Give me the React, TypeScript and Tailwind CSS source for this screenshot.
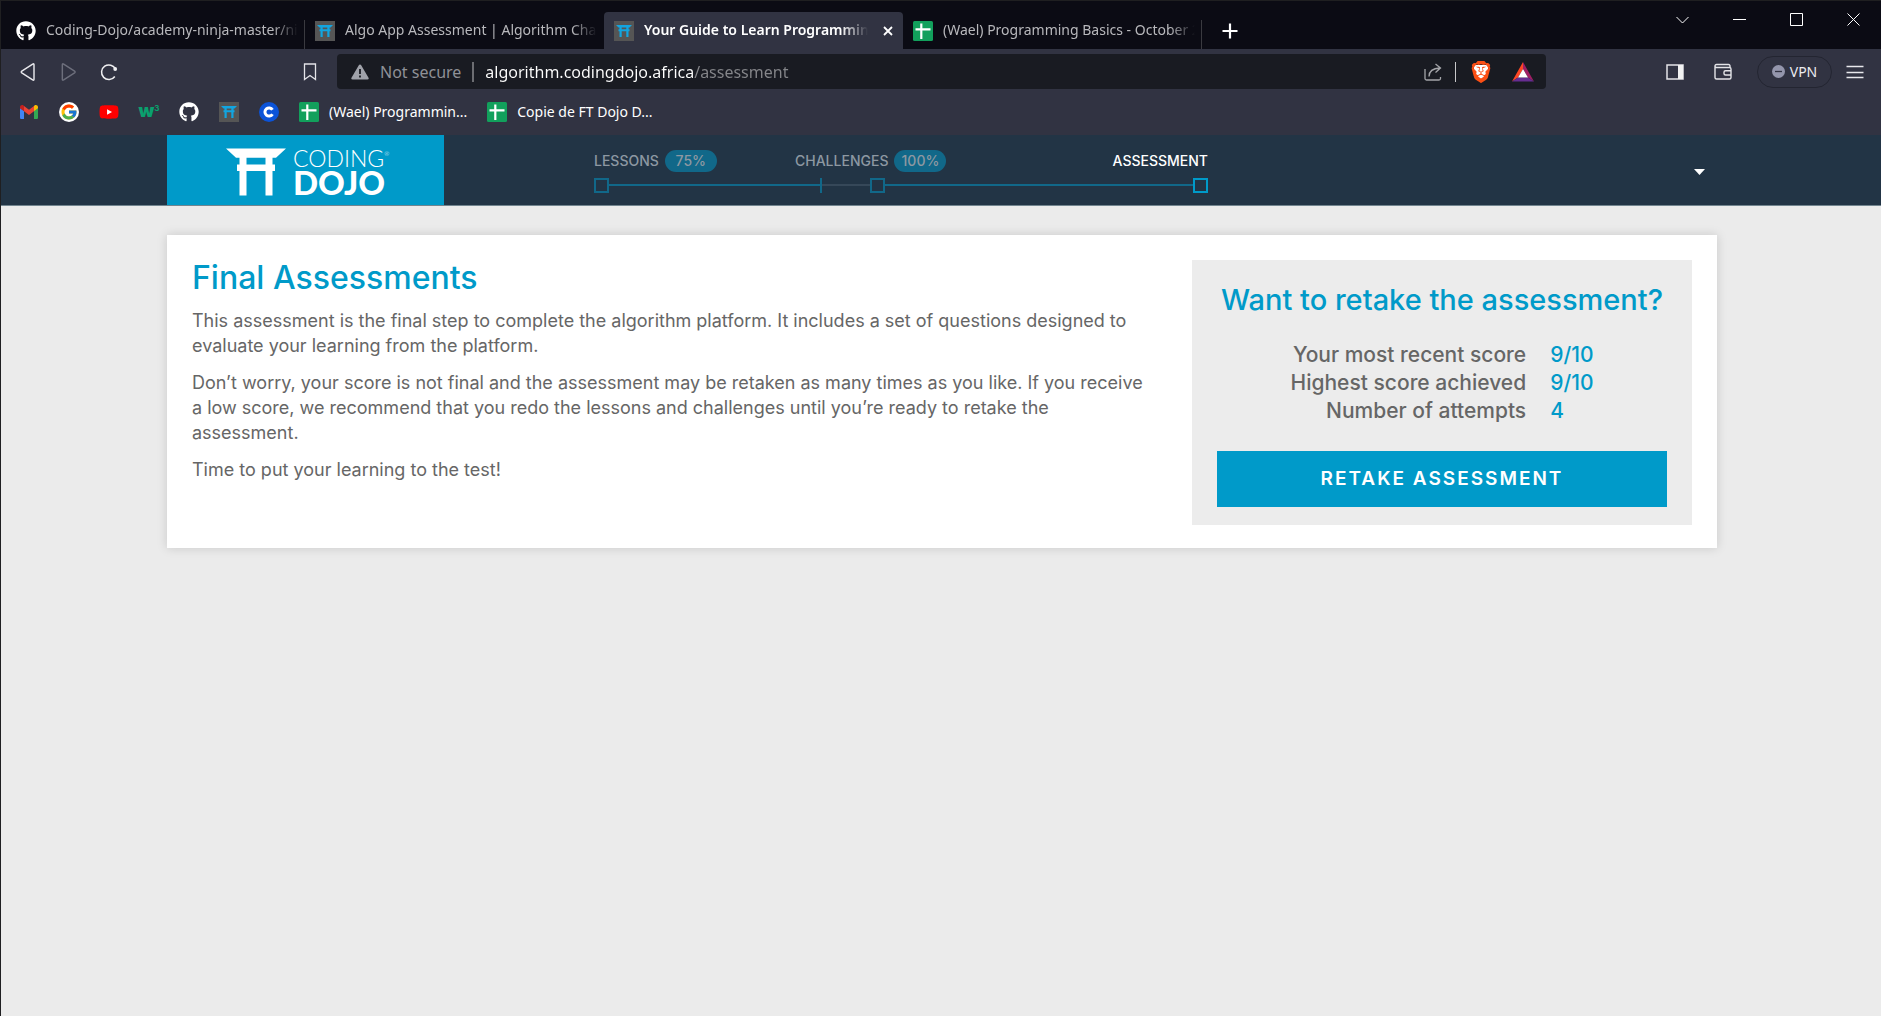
import React from "react";
import { FaGithub, FaYoutube } from "react-icons/fa";
import { FcGoogle } from "react-icons/fc";
import { SiBrave } from "react-icons/si";

function GithubIcon() {
  return <FaGithub className="size-5 shrink-0 text-white" aria-hidden="true" />;
}

function ToriiIcon() {
  return (
    <svg viewBox="0 0 20 20" className="size-5 shrink-0" aria-hidden="true">
      <rect width="20" height="20" fill="#555555" />
      <path
        fill="#12a5e0"
        d="M2 4h16l-2.500 2.600h-.9v1.600h.9v2h-1V16h-2.200v-5.800H7.700V16H5.500v-5.800h-1v-2h.9V6.600h-.9zM7.700 6.600v1.600h4.600V6.600z"
      />
    </svg>
  );
}

function SheetsIcon() {
  return (
    <svg viewBox="0 0 20 20" className="size-5 shrink-0" aria-hidden="true">
      <rect width="20" height="20" rx="1.500" fill="#12a05c" />
      <path d="M8.300 2.500v15.500M2.500 8.300h15" stroke="#fff" strokeWidth="2.200" fill="none" />
    </svg>
  );
}

function GmailIcon() {
  return (
    <svg viewBox="0 0 18 14" className="h-[14px] w-5" aria-hidden="true">
      <path fill="#4285f4" d="M0 3v9.700C0 13.400.6 14 1.300 14H4V6z" />
      <path fill="#34a853" d="M18 3v9.700c0 .7-.6 1.300-1.300 1.300H14V6z" />
      <path fill="#ea4335" d="M4 6.200V1l5 3.800L14 1v5.200l-5 3.800z" />
      <path fill="#c5221f" d="M0 2.200C0 .2 2.200-.6 3.500.5L4 1v5.200L0 3.200z" />
      <path fill="#fbbc04" d="M18 2.200C18 .2 15.800-.6 14.500.5L14 1v5.200l4-3z" />
    </svg>
  );
}

function GoogleIcon() {
  return (
    <span className="flex size-5 items-center justify-center rounded-full bg-white">
      <FcGoogle className="size-[18px]" />
    </span>
  );
}

function YoutubeIcon() {
  return (
    <span className="relative flex size-5 items-center justify-center">
      <span className="absolute size-2 bg-white" />
      <FaYoutube className="relative size-5 text-[#ff0000]" />
    </span>
  );
}

function W3Icon() {
  return (
    <span className="flex size-5 items-start justify-center font-[Inter,sans-serif] text-[#0aa06e]">
      <b className="text-lg leading-[18px] font-black">w</b>
      <b className="text-[8px] leading-3">3</b>
    </span>
  );
}

function BlueCIcon() {
  return (
    <svg viewBox="0 0 20 20" className="size-5" aria-hidden="true">
      <circle cx="10" cy="10" r="10" fill="#0b53d8" />
      <path d="M13.500 7.800a4.100 4.100 0 1 0 0 4.400" fill="none" stroke="#fff" strokeWidth="3" />
    </svg>
  );
}

function Tab({
  icon,
  title,
  active = false,
  separator = false,
}: {
  icon: React.ReactNode;
  title: string;
  active?: boolean;
  separator?: boolean;
}) {
  return (
    <div
      className={
        active
          ? "flex h-[37px] min-w-0 flex-[0_1_299px] items-center rounded-t bg-[#313342] pr-[7px] pl-[10px]"
          : "flex h-[37px] min-w-0 flex-[0_1_299px] items-center pl-[10px]"
      }
    >
      <button type="button" className="flex min-w-0 flex-1 items-center gap-[10px] text-left">
        {icon}
        <span
          className={
            active
              ? "min-w-0 flex-1 overflow-hidden mask-r-from-88% pb-[2px] text-sm font-semibold whitespace-nowrap text-white"
              : "min-w-0 flex-1 overflow-hidden mask-r-from-90% pb-[2px] text-sm whitespace-nowrap text-[#b8b8bc]"
          }
        >
          {title}
        </span>
      </button>
      {active && (
        <button type="button" aria-label="Close tab" className="ml-3 flex size-4 items-center justify-center">
          <svg viewBox="0 0 10 10" className="size-[10px]" aria-hidden="true">
            <path d="M1 1l8 8M9 1l-8 8" stroke="#fff" strokeWidth="1.800" />
          </svg>
        </button>
      )}
      {!active && <span className={separator ? "ml-[6px] h-[29px] w-px self-end bg-[#3a3a40]" : "ml-[6px] w-px"} />}
    </div>
  );
}

function TabStrip() {
  return (
    <div className="flex h-12 items-end bg-[#0b0b14] pl-[5px]">
      <div className="flex min-w-0 flex-1 items-end">
        <Tab icon={<GithubIcon />} title="Coding-Dojo/academy-ninja-master/ninja" separator />
        <Tab icon={<ToriiIcon />} title="Algo App Assessment | Algorithm Challenges" />
        <Tab icon={<ToriiIcon />} title="Your Guide to Learn Programming" active />
        <Tab icon={<SheetsIcon />} title="(Wael) Programming Basics - October 2022" separator />
        <button type="button" aria-label="New tab" className="ml-5 flex h-[37px] w-4 shrink-0 items-center">
          <svg viewBox="0 0 16 16" className="size-4" aria-hidden="true">
            <path d="M8 .5v15M.5 8h15" stroke="#fff" strokeWidth="2.200" />
          </svg>
        </button>
      </div>
      <div className="flex h-full shrink-0 items-start gap-11 pt-3 pr-[21px] text-white">
        <button type="button" aria-label="Search tabs">
          <svg viewBox="0 0 13 13" className="size-[13px]" fill="none" stroke="currentColor" aria-hidden="true">
            <path d="M.5 4l6 6 6-6" />
          </svg>
        </button>
        <button type="button" aria-label="Minimize">
          <svg viewBox="0 0 13 13" className="size-[13px]" fill="none" stroke="currentColor" aria-hidden="true">
            <path d="M0 6.500h13" />
          </svg>
        </button>
        <button type="button" aria-label="Maximize">
          <svg viewBox="0 0 13 13" className="size-[13px]" fill="none" stroke="currentColor" aria-hidden="true">
            <path d="M.5.5h12v12H.5z" />
          </svg>
        </button>
        <button type="button" aria-label="Close window">
          <svg viewBox="0 0 13 13" className="size-[13px]" fill="none" stroke="currentColor" aria-hidden="true">
            <path d="M.5.5l12 12M12.500.5l-12 12" />
          </svg>
        </button>
      </div>
    </div>
  );
}

function Toolbar() {
  return (
    <div className="flex items-center pt-[5px] pr-[17px] pl-[18px]">
      <div className="flex items-center gap-5">
        <button type="button" aria-label="Back">
          <svg viewBox="0 0 18 18" className="size-5" fill="none" stroke="#e8e8ec" strokeWidth="1.300" strokeLinejoin="round" aria-hidden="true">
            <path d="M13.500 2.500v13q0 1.300-1.200.6L2.500 9.800q-1-.8 0-1.600l9.800-6.300q1.200-.7 1.200.6z" />
          </svg>
        </button>
        <button type="button" aria-label="Forward">
          <svg viewBox="0 0 18 18" className="size-5" fill="none" stroke="#6d6f7c" strokeWidth="1.300" strokeLinejoin="round" aria-hidden="true">
            <path d="M3 2.500v13q0 1.300 1.200.6l9.800-6.300q1-.8 0-1.600L4.200 1.900Q3 1.200 3 2.500z" />
          </svg>
        </button>
        <button type="button" aria-label="Reload">
          <svg viewBox="0 0 20 20" className="size-5" fill="none" stroke="#f0f0f2" strokeWidth="1.500" aria-hidden="true">
            <path d="M16.500 7.200A7.300 7.300 0 1 0 15.800 14.500" />
            <circle cx="16.200" cy="7" r="1.900" fill="#f0f0f2" stroke="none" />
          </svg>
        </button>
      </div>
      <button type="button" aria-label="Bookmark this page" className="ml-[184px]">
        <svg viewBox="0 0 14 18" className="h-[18px] w-[14px]" fill="none" stroke="#e4e4e8" strokeWidth="1.300" aria-hidden="true">
          <path d="M1.500 1h11v15.500L7 12.500l-5.500 4z" />
        </svg>
      </button>
      <div className="ml-5 flex h-[35px] min-w-0 max-w-[1209px] flex-1 items-center rounded bg-[#191b22] pr-3 pl-[14px] text-base">
        <svg viewBox="0 0 18 16" className="h-4 w-[18px] shrink-0" aria-hidden="true">
          <path d="M9 .5q.8 0 1.200.7l7.300 12.500q.8 1.800-1.100 1.800H1.600Q-.3 15.500.5 13.700L7.800 1.200Q8.200.5 9 .5z" fill="#a0a2aa" />
          <path d="M9 5v5M9 11.500v2" stroke="#191b22" strokeWidth="1.800" />
        </svg>
        <span className="ml-[11px] shrink-0 text-[#8f9197]">Not secure</span>
        <span className="mx-[11px] h-5 w-[2px] shrink-0 bg-[#6c6d72]" />
        <input
          type="text"
          aria-label="Address"
          defaultValue="algorithm.codingdojo.africa/assessment"
          className="min-w-0 flex-1 bg-[linear-gradient(90deg,#ffffff_209px,#85868a_209px)] bg-clip-text text-transparent caret-white outline-none"
        />
        <button type="button" aria-label="Share" className="shrink-0">
          <svg viewBox="0 0 20 20" className="size-5" fill="none" stroke="#a4a5a9" strokeWidth="1.300" aria-hidden="true">
            <path d="M2 7v9.500q0 1.500 1.500 1.500h12.500q1.500 0 1.500-1.500V15" />
            <path d="M6 14.500q0-8 11-8.500M12.500 2l5 4-5 4.500" />
          </svg>
        </button>
        <span className="mr-[14px] ml-3 h-5 w-px shrink-0 bg-[#c8c8ca]" />
        <button type="button" aria-label="Brave Shields" className="relative flex shrink-0 items-center justify-center">
          <span className="absolute size-[14px] rounded-b-md bg-white" />
          <SiBrave className="relative size-[22px] text-[#fb4f14]" />
        </button>
        <button type="button" aria-label="Brave Rewards" className="ml-5 shrink-0">
          <svg viewBox="0 0 22 20" className="h-5 w-[22px]" aria-hidden="true">
            <path d="M11 0v7L6 15.500 0 19.500z" fill="#ff4724" />
            <path d="M11 0l11 19.500-6-4L11 7z" fill="#9e1f63" />
            <path d="M0 19.500l6-4h10l6 4z" fill="#662d91" />
            <path d="M11 7l5 8.500H6z" fill="#fff" />
          </svg>
        </button>
      </div>
      <div className="ml-auto flex shrink-0 items-center">
        <button type="button" aria-label="Sidebar">
          <svg viewBox="0 0 18 16" className="h-4 w-[18px]" aria-hidden="true">
            <path d="M1 1h16v14H1z" fill="none" stroke="#e4e4e8" strokeWidth="1.500" />
            <path d="M12 1h5v14h-5z" fill="#f2f2f2" />
          </svg>
        </button>
        <button type="button" aria-label="Wallet" className="ml-[30px]">
          <svg viewBox="0 0 18 17" className="h-[17px] w-[18px]" fill="none" stroke="#e4e4e8" strokeWidth="1.400" aria-hidden="true">
            <path d="M16 4.500V3q0-1.500-1.500-1.500H2.500Q1 1.500 1 3v11.500Q1 16 2.500 16h13q1.500 0 1.500-1.500V6q0-1.500-1.500-1.500H2.500Q1 4.500 1 3" />
            <path d="M17 7.800h-5.500q-1.500 0-1.500 1.500v1.200q0 1.500 1.500 1.500H17" />
          </svg>
        </button>
        <button
          type="button"
          className="ml-[25px] flex h-8 w-[75px] items-center justify-center gap-[5px] rounded-full border border-[#232531] text-sm text-[#ececf0]"
        >
          <svg viewBox="0 0 13 13" className="size-[13px]" aria-hidden="true">
            <circle cx="6.500" cy="6.500" r="6.500" fill="#9496ac" />
            <path d="M3 6.500h7" stroke="#313342" strokeWidth="1.300" />
          </svg>
          VPN
        </button>
        <button type="button" aria-label="Menu" className="ml-[14px]">
          <svg viewBox="0 0 18 14" className="h-[14px] w-[18px]" stroke="#e8e8ec" strokeWidth="1.300" aria-hidden="true">
            <path d="M.5 1.500h17M.5 7.500h17M.5 12.500h17" />
          </svg>
        </button>
      </div>
    </div>
  );
}

const bookmarks: { name: string; icon: React.ReactNode }[] = [
  { name: "Gmail", icon: <GmailIcon /> },
  { name: "Google", icon: <GoogleIcon /> },
  { name: "YouTube", icon: <YoutubeIcon /> },
  { name: "W3Schools", icon: <W3Icon /> },
  { name: "GitHub", icon: <GithubIcon /> },
  { name: "Coding Dojo", icon: <ToriiIcon /> },
  { name: "Coinbase", icon: <BlueCIcon /> },
];

function BookmarksBar() {
  return (
    <div className="flex h-[46px] items-center gap-5 pl-[18px] text-sm text-white">
      {bookmarks.map((b) => (
        <a key={b.name} href="#" aria-label={b.name} className="flex w-5 shrink-0 items-center justify-center">
          {b.icon}
        </a>
      ))}
      <a href="#" className="flex items-center gap-[10px]">
        <SheetsIcon />
        (Wael) Programmin...
      </a>
      <a href="#" className="flex items-center gap-[10px]">
        <SheetsIcon />
        Copie de FT Dojo D...
      </a>
    </div>
  );
}

function Logo() {
  return (
    <a
      href="#"
      aria-label="Coding Dojo"
      className="flex h-[70px] w-[277px] shrink-0 items-center gap-[7px] bg-[#009ac9] pt-1 pl-[59px] font-[Lato,sans-serif] text-white"
    >
      <svg viewBox="0 0 60 48" className="h-12 w-[60px]" fill="currentColor" aria-hidden="true">
        <path d="M0 .5h60L50 9.700h-3.500v6.800H49V23h-2.500v24.500h-7V23h-19v24.500h-7V23H11v-6.500h2.500V9.700H10zM20.500 9.700v6.800h19V9.700z" />
      </svg>
      <span className="flex flex-col">
        <span className="flex text-[23px] leading-5 font-light">
          CODING<span className="text-[6px] leading-3">®</span>
        </span>
        <span className="text-[33px] leading-7 font-black">DOJO</span>
      </span>
    </a>
  );
}

function Node({ current = false }: { current?: boolean }) {
  return (
    <span
      className={
        current ? "size-[15px] shrink-0 border-2 border-[#009ac9]" : "size-[15px] shrink-0 border-2 border-[#116889]"
      }
    />
  );
}

function Progress() {
  return (
    <nav className="w-full max-w-[614px] text-sm font-medium text-[#8d98a2]">
      <div className="flex h-[22px] items-center">
        <a href="#" className="flex w-[201px] items-center gap-[6px]">
          LESSONS
          <span className="flex h-[22px] w-[52px] items-center justify-center rounded-full bg-[#116889]">75%</span>
        </a>
        <a href="#" className="flex items-center gap-[6px]">
          CHALLENGES
          <span className="flex h-[22px] w-[52px] items-center justify-center rounded-full bg-[#116889]">100%</span>
        </a>
        <a href="#" className="ml-auto text-white">
          ASSESSMENT
        </a>
      </div>
      <div className="mt-[6px] flex items-center">
        <Node />
        <span className="h-[2px] flex-[211] bg-[#116889]" />
        <span className="h-[15px] w-[2px] bg-[#116889]" />
        <span className="h-[2px] flex-[48] bg-[#364859]" />
        <Node />
        <span className="h-[2px] flex-[308] bg-[#116889]" />
        <Node current />
      </div>
    </nav>
  );
}

function SiteHeader() {
  return (
    <header className="border-b border-[#72858f] bg-[#223445] pl-[2px]">
      <div className="mx-auto flex max-w-[1550px] items-center">
        <Logo />
        <div className="ml-[150px] flex flex-1 pt-[2px]">
          <Progress />
        </div>
        <button type="button" aria-label="Account menu" className="mr-2 p-1 pt-[7px]">
          <svg viewBox="0 0 11 6" className="h-[6px] w-[11px]" aria-hidden="true">
            <path d="M0 0h11L5.500 6z" fill="#fff" />
          </svg>
        </button>
      </div>
    </header>
  );
}

const scores = [
  ["Your most recent score", "9/10"],
  ["Highest score achieved", "9/10"],
  ["Number of attempts", "4"],
];

function RetakePanel() {
  return (
    <aside className="w-[500px] shrink-0 bg-[#ececec] px-[25px] pt-5 pb-[18px]">
      <h2 className="text-center text-[29px] leading-10 font-medium whitespace-nowrap text-[#009ac9]">
        Want to retake the assessment?
      </h2>
      <table className="mx-auto mt-[21px] text-[21px] leading-7 font-medium">
        <tbody>
          {scores.map(([label, value]) => (
            <tr key={label}>
              <th scope="row" className="pr-6 text-right font-medium">
                {label}
              </th>
              <td className="text-[#009ac9]">{value}</td>
            </tr>
          ))}
        </tbody>
      </table>
      <button
        type="button"
        className="mt-[26px] h-14 w-full bg-[#009ac9] text-[19px] font-semibold tracking-[2px] text-white"
      >
        RETAKE ASSESSMENT
      </button>
    </aside>
  );
}

export default function App() {
  return (
    <div className="flex min-h-screen flex-col border-t border-l border-[#1f1f21] bg-[#ebebeb] font-[Noto_Sans,sans-serif]">
      <div className="bg-[#313342]">
        <TabStrip />
        <Toolbar />
        <BookmarksBar />
      </div>
      <div className="font-[Inter,sans-serif] text-[#666666]">
        <SiteHeader />
        <div className="pt-[29px] pl-[2px]">
          <main className="mx-auto flex max-w-[1550px] items-start justify-between bg-white p-[25px] pb-[23px] shadow-[0_0_10px_rgba(0,0,0,0.15)]">
            <section className="max-w-[952px] text-lg leading-[25px]">
              <h1 className="mb-3 text-[32px] leading-9 font-medium text-[#009ac9]">Final Assessments</h1>
              <p className="mb-3">
                This assessment is the final step to complete the algorithm platform. It includes a set of questions
                designed to evaluate your learning from the platform.
              </p>
              <p className="mb-3">
                Don’t worry, your score is not final and the assessment may be retaken as many times as you like. If you
                receive a low score, we recommend that you redo the lessons and challenges until you’re ready to retake
                the assessment.
              </p>
              <p>Time to put your learning to the test!</p>
            </section>
            <RetakePanel />
          </main>
        </div>
      </div>
    </div>
  );
}
